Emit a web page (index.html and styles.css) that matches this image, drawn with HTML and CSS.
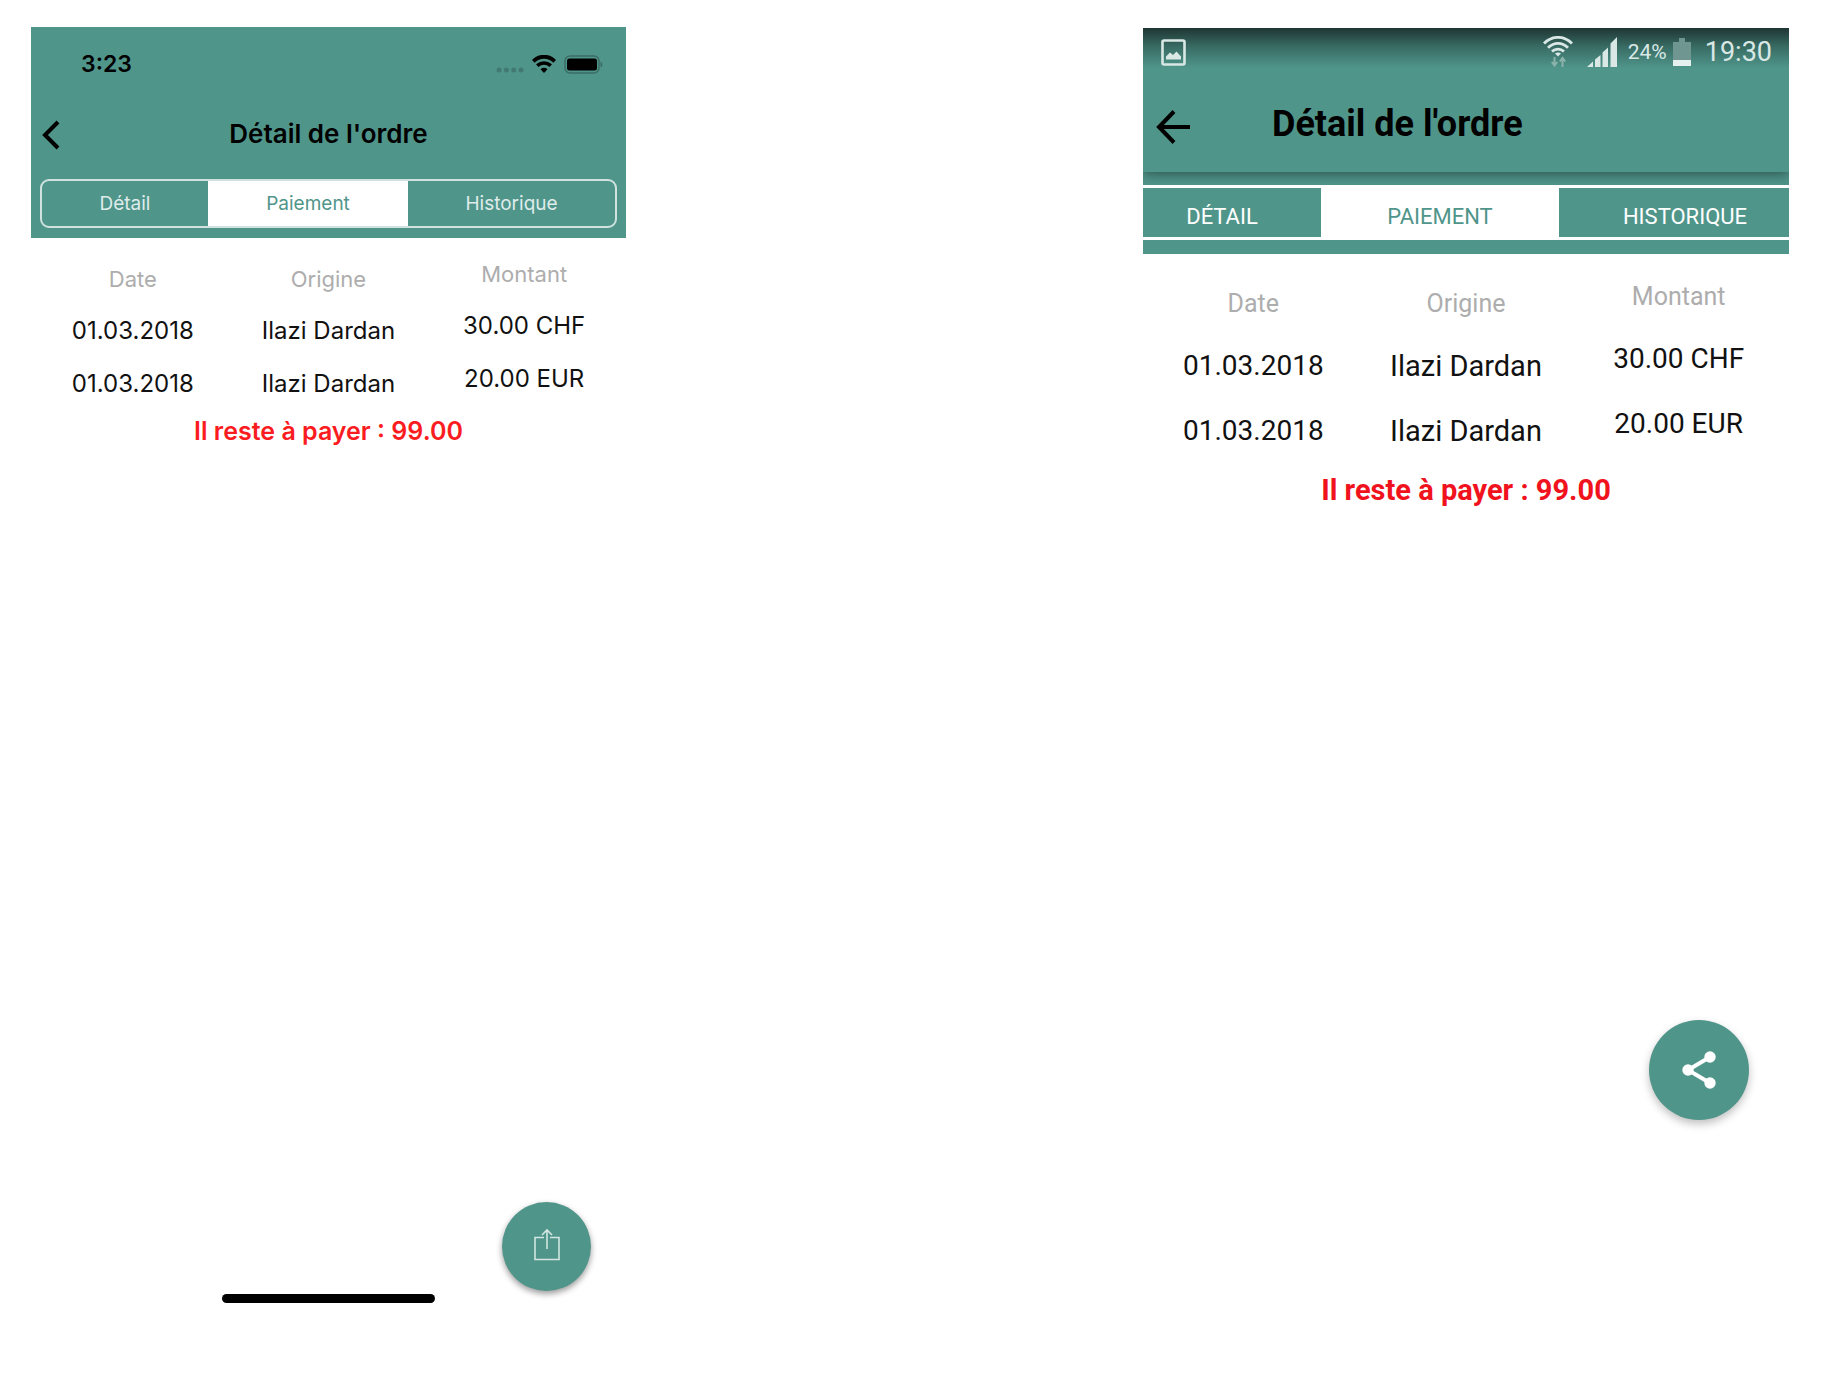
FILE: index.html
```html
<!DOCTYPE html>
<html lang="fr">
<head>
<meta charset="utf-8">
<meta name="viewport" content="width=device-width, initial-scale=1">
<title>Détail de l'ordre</title>
<link rel="stylesheet" href="styles.css">
</head>
<body>
<main class="stage">
  <section class="phone ios">
    <header class="header">
      <div class="status">
        <span class="clock">3:23</span>
        <svg class="dots" width="28" height="18" viewBox="0 0 28 18" fill="#427a71" aria-hidden="true"><circle cx="3" cy="15" r="2.5"/><circle cx="10.400" cy="15" r="2.5"/><circle cx="17.700" cy="15" r="2.5"/><circle cx="25" cy="15" r="2.5"/></svg>
        <svg class="wifi" width="24" height="18" viewBox="0 0 24 18" fill="none" stroke="#000" aria-hidden="true"><path d="M1.300 6.300C7.500 .2 16.500 .2 22.700 6.300" stroke-width="3.800"/><path d="M5.200 10.700C9.300 7.200 14.700 7.200 18.800 10.700" stroke-width="3.600"/><path d="M8.500 14.200C10.500 12.400 13.500 12.400 15.500 14.200L12 17.900Z" fill="#000" stroke="none"/></svg>
        <svg class="battery" width="39" height="19" viewBox="0 0 39 19" aria-hidden="true"><rect x="1" y="1" width="34" height="17" rx="5" fill="none" stroke="#3a6d65" stroke-width="1.500"/><rect x="3" y="3.500" width="30" height="12" rx="2.500"/><path d="M36.500 6.500C39 7.500 39 11.500 36.500 12.500Z" fill="#3a6d65"/></svg>
      </div>
      <div class="nav">
        <button class="back" type="button" aria-label="Retour"><svg width="18" height="30" viewBox="0 0 18 30" fill="none" stroke="#000" stroke-width="4"><path d="M16 2L3 15L16 28"/></svg></button>
        <h1 class="title">Détail de l'ordre</h1>
      </div>
      <div class="segments">
        <button class="segment" type="button">Détail</button>
        <button class="segment active" type="button">Paiement</button>
        <button class="segment" type="button">Historique</button>
      </div>
    </header>
    <table class="payments">
      <thead><tr><th>Date</th><th>Origine</th><th class="amount">Montant</th></tr></thead>
      <tbody>
        <tr><td>01.03.2018</td><td>Ilazi Dardan</td><td class="amount">30.00 CHF</td></tr>
        <tr><td>01.03.2018</td><td>Ilazi Dardan</td><td class="amount">20.00 EUR</td></tr>
      </tbody>
    </table>
    <p class="due">Il reste à payer : 99.00</p>
    <button class="fab" type="button" aria-label="Partager"><svg width="26" height="33" viewBox="0 0 26 33" fill="none" stroke="#d3e6e2" stroke-width="1.600"><path d="M10 9.500H1V31.500H25V9.500H16M13 21V2M8 7L13 2L18 7"/></svg></button>
    <div class="home"></div>
  </section>

  <section class="phone android">
    <header class="header">
      <div class="status">
        <svg class="picture" width="25" height="27" viewBox="0 0 25 27" aria-hidden="true"><rect x="1.500" y="1.500" width="22" height="24" rx="1.500" fill="none" stroke="#d9e8e5" stroke-width="2.600"/><path d="M5 20.500V17.500L9 13.500L12 16L15.500 12.500L20 17.500V20.500Z" fill="#d9e8e5"/></svg>
        <svg class="wifi" width="30" height="32" viewBox="0 0 30 32" fill="none" stroke="#d9e8e5" stroke-width="2.800" aria-hidden="true"><path d="M1 7.500C9 -.700 21 -.700 29 7.500M5 11.700C11 5.800 19 5.800 25 11.700M9 15.500C12.500 12.300 17.500 12.300 21 15.500"/><path d="M12 17.500C13.500 16.200 16.500 16.200 18 17.500L15 20.500Z" fill="#d9e8e5" stroke="none"/><path d="M11.500 21V29M8.800 26L11.500 29.500L14.200 26M19.500 31V23M16.800 25.500L19.500 22L22.200 25.500" stroke="#8bb3ac" stroke-width="2"/></svg>
        <svg class="signal" width="30" height="30" viewBox="0 0 30 30" fill="#d9e8e5" aria-hidden="true"><path d="M0 30L6 24.500V30ZM8 22.500L13.500 18V30H8ZM15.500 15.500L21 10.500V30H15.500ZM23.500 6.500L30 0V30H23.500Z"/></svg>
        <span class="percent">24%</span>
        <svg class="battery" width="18" height="29" viewBox="0 0 18 29" aria-hidden="true"><path d="M6 0H12V4H18V22H0V4H6Z" fill="#6f9690"/><path d="M0 22H18V28H0Z" fill="#e6f1ef"/></svg>
        <span class="clock">19:30</span>
      </div>
      <div class="nav">
        <button class="back" type="button" aria-label="Retour"><svg width="34" height="34" viewBox="0 0 34 34" fill="none" stroke="#000" stroke-width="4"><path d="M18 1.500L3 17L18 32.500M3 17H34"/></svg></button>
        <h1 class="title">Détail de l'ordre</h1>
      </div>
      <div class="segments">
        <button class="segment" type="button">DÉTAIL</button>
        <button class="segment active" type="button">PAIEMENT</button>
        <button class="segment" type="button">HISTORIQUE</button>
      </div>
    </header>
    <table class="payments">
      <thead><tr><th>Date</th><th>Origine</th><th class="amount">Montant</th></tr></thead>
      <tbody>
        <tr><td>01.03.2018</td><td class="name">Ilazi Dardan</td><td class="amount">30.00 CHF</td></tr>
        <tr><td>01.03.2018</td><td class="name">Ilazi Dardan</td><td class="amount">20.00 EUR</td></tr>
      </tbody>
    </table>
    <p class="due">Il reste à payer : 99.00</p>
    <button class="fab" type="button" aria-label="Partager"><svg width="34" height="38" viewBox="0 0 34 38" fill="#fff" stroke="#fff"><path d="M28 6L6 19L28 32" fill="none" stroke-width="4"/><g stroke="none"><circle cx="28" cy="6" r="5.700"/><circle cx="6" cy="19" r="5.700"/><circle cx="28" cy="32" r="5.700"/></g></svg></button>
  </section>
</main>
</body>
</html>
```
FILE: styles.css
```css
* { box-sizing: border-box; }
body { margin: 0; background: #fff; color: #000; }
button { margin: 0; padding: 0; border: 0; background: none; color: inherit; font: inherit; cursor: pointer; }
svg { display: block; }

.stage {
  display: grid;
  grid-template-columns: 595fr 517fr 646fr;
  align-items: start;
  padding: 27px 55px 27px 31px;
}
.phone { display: flex; flex-direction: column; min-width: 0; }
.header { background: #50958a; }
.status, .nav { display: flex; align-items: center; }
.title { margin: 0; white-space: nowrap; }
.payments { table-layout: fixed; border-collapse: collapse; }
.payments th, .payments td { padding: 0; text-align: center; vertical-align: middle; white-space: nowrap; }
.payments th { color: #adadad; font-weight: 400; }
.due { margin: 0; text-align: center; font-weight: 700; }
.fab {
  display: flex;
  align-items: center;
  justify-content: center;
  align-self: flex-end;
  margin-top: auto;
  border-radius: 50%;
  background: #50958a;
}

/* iOS */
.ios { aspect-ratio: 375 / 812; font-family: Inter, "Liberation Sans", sans-serif; }
.ios .header { padding-bottom: 10px; }
.ios .status { height: 74px; padding: 0 23px 0 50px; }
.ios .clock { margin-right: auto; font-size: 23px; font-weight: 600; }
.ios .wifi { margin: 0 8px 0 8px; }
.ios .nav { display: grid; grid-template-columns: 1fr auto 1fr; height: 64px; padding: 0 11px; }
.ios .back { justify-self: start; padding-top: 4px; }
.ios .title { font-size: 26px; font-weight: 600; }
.ios .segments {
  display: grid;
  grid-template-columns: 166fr 200fr 207fr;
  height: 49px;
  margin: 14px 9px 0;
  border: 2px solid #cfe2df;
  border-radius: 9px;
}
.ios .segment { color: #dfecea; font-size: 19px; }
.ios .segment.active { background: #fff; color: #50958a; }
.ios .payments { width: calc(100% - 8px); margin: 16px 4px 0; }
.ios th { height: 50px; font-size: 22px; }
.ios td { height: 53px; font-size: 24px; color: #111; }
.ios .payments .amount { padding-bottom: 10px; }
.ios .due { font-size: 25px; line-height: 43px; font-weight: 600; color: #fb1c22; }
.ios .fab { width: 89px; height: 89px; margin-right: 35px; padding-bottom: 5px; box-shadow: 0 3px 6px rgba(0, 0, 0, .4); }
.ios .home { width: 213px; height: 9px; margin: 3px auto 12px; border-radius: 5px; background: #000; }

/* Android */
.android { grid-column: 3; margin-top: 1px; aspect-ratio: 9 / 16; font-family: Roboto, "Liberation Sans", sans-serif; }
.android .header {
  overflow: hidden;
  padding-bottom: 14px;
  background: linear-gradient(#1f3533 0, #376a62 18px, #50958a 40px);
}
.android .status { height: 48px; padding: 0 17px 0 18px; color: #d9e8e5; }
.android .picture { margin-right: auto; }
.android .signal { margin: 0 11px 0 14px; }
.android .percent { font-size: 21px; }
.android .battery { margin: 0 14px 0 6px; }
.android .status .clock { font-size: 27px; }
.android .nav { height: 96px; gap: 82px; padding: 0 13px; }
.android .back { padding-top: 6px; }
.android .title { font-size: 36px; font-weight: 700; }
.android .header .nav { box-shadow: 0 2px 12px rgba(0, 0, 0, .45); clip-path: inset(0 0 -13px 0); }
.android .segments {
  display: grid;
  grid-template-columns: 198fr 238fr 252fr;
  height: 55px;
  margin: 13px -22px 0 -20px;
  border: solid #fff;
  border-width: 3px 0;
}
.android .segment { padding-top: 8px; color: #fff; font-size: 22px; }
.android .segment.active { background: #fff; color: #50958a; }
.android .payments { width: calc(100% - 8px); margin: 20px 4px 0; }
.android th { height: 59px; font-size: 25px; }
.android td { height: 65px; font-size: 28px; color: #111; }
.android .name { font-size: 29px; }
.android .payments .amount { padding-bottom: 14px; }
.android .due { font-size: 29px; line-height: 54px; color: #f0121c; }
.android .fab { width: 100px; height: 100px; margin: auto 40px 56px 0; box-shadow: 0 4px 8px rgba(0, 0, 0, .25); }
```
